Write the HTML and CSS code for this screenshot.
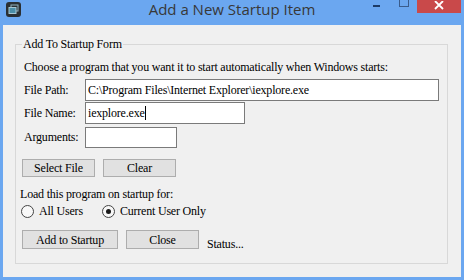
FILE: index.html
```html
<!DOCTYPE html>
<html lang="en">
<head>
    <meta charset="UTF-8">
    <title>Add a New Startup Item</title>
    <link rel="stylesheet" href="styles.css">
</head>
<body>
    <div class="window">
        <div class="titlebar">
            <div class="app-icon">
                <svg width="15" height="15" viewBox="0 0 15 15">
                    <rect x="0" y="0" width="15" height="15" rx="3" fill="#2a2f33"/>
                    <rect x="5" y="3" width="7" height="6" fill="none" stroke="#8fb3c2" stroke-width="1"/>
                    <rect x="3" y="5.5" width="7" height="6" fill="#4b8ea8" stroke="#a6c7d4" stroke-width="1"/>
                </svg>
            </div>
            <div class="title">Add a New Startup Item</div>
            <div class="controls">
                <span class="btn-min"></span>
                <span class="btn-max"></span>
                <span class="btn-close">
                    <svg width="10" height="9" viewBox="0 0 10 9">
                        <path d="M1 0 L9 8 M9 0 L1 8" stroke="#fff" stroke-width="1.8"/>
                    </svg>
                </span>
            </div>
        </div>

        <div class="client">
            <fieldset class="group">
                <legend>Add To Startup Form</legend>

                <div class="intro">Choose a program that you want it to start automatically when Windows starts:</div>

                <div class="row row-path">
                    <span class="label">File Path:</span>
                    <div class="textbox tb-path">C:\Program Files\Internet Explorer\iexplore.exe</div>
                </div>
                <div class="row row-name">
                    <span class="label">File Name:</span>
                    <div class="textbox tb-name">iexplore.exe<span class="caret"></span></div>
                </div>
                <div class="row row-args">
                    <span class="label">Arguments:</span>
                    <div class="textbox tb-args"></div>
                </div>

                <div class="buttons buttons-top">
                    <button class="btn btn-small">Select File</button>
                    <button class="btn btn-small">Clear</button>
                </div>

                <div class="load-label">Load this program on startup for:</div>
                <div class="radios">
                    <label class="radio"><span class="circle"></span>All Users</label>
                    <label class="radio checked"><span class="circle"></span>Current User Only</label>
                </div>

                <div class="buttons buttons-bottom">
                    <button class="btn btn-add">Add to Startup</button>
                    <button class="btn btn-close-form">Close</button>
                    <span class="status">Status...</span>
                </div>
            </fieldset>
        </div>
    </div>
</body>
</html>
```

FILE: styles.css
```css
body {
    margin: 0;
    font-family: "Liberation Serif", "Times New Roman", serif;
    font-size: 12px;
    letter-spacing: -0.2px;
    color: #000;
}
.window {
    width: 464px;
    height: 280px;
    background-color: #6ba7f0;
    display: flex;
    flex-direction: column;
}
.titlebar {
    height: 25px;
    display: grid;
    grid-template-columns: 1fr auto 1fr;
    align-items: start;
    letter-spacing: 0;
}
.app-icon {
    padding: 2px 0 0 6px;
    height: 15px;
}
.title {
    font-family: "Open Sans", "Noto Sans", sans-serif;
    font-size: 15px;
    line-height: 18px;
    color: #383838;
}
.controls {
    display: flex;
    justify-content: flex-end;
    align-items: flex-start;
    padding-right: 3px;
}
.btn-min {
    width: 7px;
    height: 2px;
    background-color: #1d3b66;
    margin: 5px 19px 0 0;
}
.btn-max {
    width: 8px;
    height: 6px;
    border: 1px solid #3a5c8c;
    border-top: none;
    margin-right: 8px;
}
.btn-close {
    width: 44px;
    height: 13px;
    background-color: #c9494a;
    display: flex;
    justify-content: center;
    align-items: flex-start;
    padding-top: 1px;
    box-sizing: border-box;
}
.client {
    flex: 1;
    margin: 0 3px 3px 3px;
    background-color: #f0f0f0;
    padding: 12px 13px 13px 12px;
    display: flex;
    flex-direction: column;
}
.group {
    flex: 1;
    margin: 0;
    border: 1px solid #d8d8d8;
    padding: 9px 8px 0 8px;
    min-width: 0;
}
.group legend {
    padding: 0 1px;
    margin-left: -2px;
    line-height: 14px;
}
.intro {
    line-height: 14px;
    white-space: nowrap;
}
.row {
    display: flex;
    align-items: center;
}
.label {
    width: 61px;
    flex: none;
}
.row-path {
    margin-top: 5px;
}
.row-name {
    margin-top: 1px;
}
.row-args {
    margin-top: 3px;
}
.textbox {
    height: 22px;
    box-sizing: border-box;
    border: 1px solid #7a7a7a;
    background-color: #fff;
    padding: 0 2px;
    line-height: 20px;
    white-space: nowrap;
    overflow: hidden;
}
.tb-path {
    width: 357px;
}
.tb-name {
    width: 160px;
}
.tb-args {
    width: 92px;
    height: 21px;
}
.caret {
    display: inline-block;
    width: 1px;
    height: 14px;
    background-color: #000;
    vertical-align: -3px;
}
.buttons {
    display: flex;
    align-items: flex-start;
    gap: 8px;
    margin-left: -2px;
}
.buttons-top {
    margin-top: 11px;
}
.btn {
    font-family: "Liberation Serif", "Times New Roman", serif;
    font-size: 12px;
    letter-spacing: -0.2px;
    background-color: #e1e1e1;
    border: 1px solid #adadad;
    padding: 0;
    margin: 0;
    color: #000;
    line-height: 16px;
}
.btn-small {
    width: 73px;
    height: 18px;
}
.btn-add {
    width: 96px;
    height: 19px;
}
.btn-close-form {
    width: 73px;
    height: 19px;
}
.load-label {
    margin-top: 10px;
    margin-left: -4px;
    line-height: 14px;
}
.radios {
    display: flex;
    margin-top: 3px;
    margin-left: -3px;
    height: 14px;
    align-items: center;
}
.radio {
    display: flex;
    align-items: center;
}
.radio + .radio {
    margin-left: 19px;
}
.circle {
    width: 11px;
    height: 11px;
    border: 1px solid #444;
    border-radius: 50%;
    background-color: #f8f8f8;
    margin-right: 5px;
    display: flex;
    justify-content: center;
    align-items: center;
}
.checked .circle::after {
    content: "";
    width: 5px;
    height: 5px;
    border-radius: 50%;
    background-color: #1a1a1a;
}
.buttons-bottom {
    margin-top: 12px;
}
.status {
    margin-top: 7px;
    line-height: 14px;
}
```
